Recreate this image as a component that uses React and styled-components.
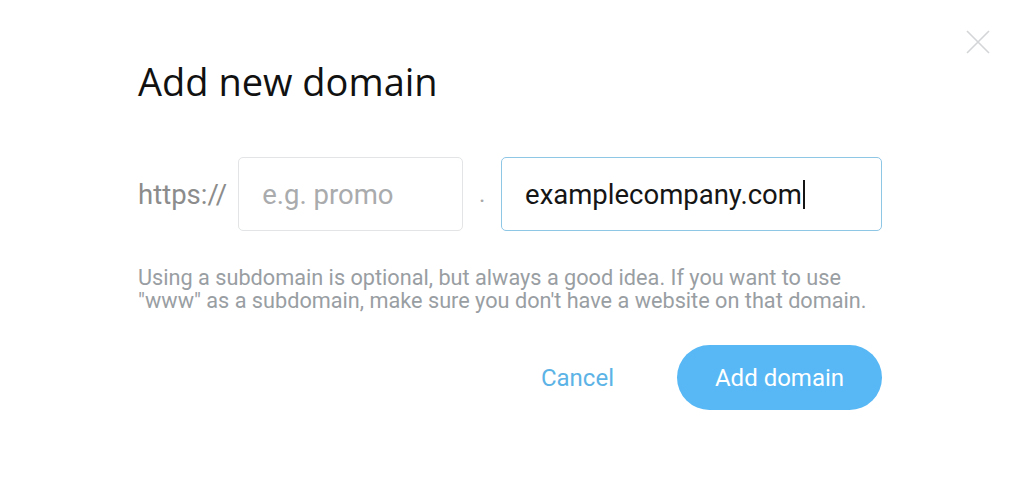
import React from "react";
import styled, { createGlobalStyle } from "styled-components";

const Global = createGlobalStyle`
  html, body {
    margin: 0;
    padding: 0;
    background: #ffffff;
  }
  body {
    font-family: Roboto, "Liberation Sans", sans-serif;
  }
`;

const Page = styled.div`
  position: relative;
  width: 1024px;
  height: 477px;
  box-sizing: border-box;
  padding: 56px 142px 0 138px;
`;

const Close = styled.button`
  position: absolute;
  top: 28px;
  right: 32px;
  width: 28px;
  height: 28px;
  padding: 0;
  border: none;
  background: none;
  cursor: pointer;
`;

const Title = styled.h1`
  margin: 0;
  font-family: "Open Sans", "Noto Sans", sans-serif;
  font-weight: 400;
  font-size: 38px;
  line-height: 50px;
  color: #111111;
`;

const Row = styled.div`
  display: flex;
  align-items: center;
  margin-top: 51px;
`;

const Prefix = styled.span`
  font-size: 27.5px;
  color: #8c8c8c;
  margin-right: 11px;
`;

const Dot = styled.span`
  width: 38px;
  text-align: center;
  font-size: 24px;
  color: #a8a8a8;
`;

const Input = styled.div`
  box-sizing: border-box;
  width: ${(p) => p.$width}px;
  height: 74px;
  display: flex;
  align-items: center;
  padding-left: 23px;
  border: 1px solid ${(p) => (p.$focused ? "#8ec6e6" : "#e2e4e6")};
  border-radius: 5px;
  font-size: 27.5px;
  color: ${(p) => (p.$placeholder ? "#a9abad" : "#151515")};
`;

const Caret = styled.span`
  display: inline-block;
  width: 2px;
  height: 29px;
  margin-left: 1px;
  background: #151515;
`;

const Help = styled.p`
  margin: 35px 0 0;
  font-size: 21.7px;
  line-height: 23px;
  color: #999ea3;
`;

const Actions = styled.div`
  display: flex;
  justify-content: flex-end;
  align-items: center;
  margin-top: 33px;
`;

const CancelButton = styled.button`
  border: none;
  background: none;
  padding: 0;
  margin-right: 63px;
  font-family: Roboto, sans-serif;
  font-size: 24px;
  color: #5cb3e6;
  cursor: pointer;
`;

const PrimaryButton = styled.button`
  width: 205px;
  height: 65px;
  border: none;
  border-radius: 33px;
  background: #57b8f5;
  font-family: Roboto, sans-serif;
  font-size: 24px;
  color: #ffffff;
  cursor: pointer;
`;

const App = () => {
  return (
    <>
      <Global />
      <Page>
        <Close aria-label="Close">
          <svg width="28" height="28" viewBox="0 0 28 28">
            <path d="M3 3 L25 25 M25 3 L3 25" stroke="#d3d5d7" strokeWidth="1.6" fill="none" />
          </svg>
        </Close>
        <Title>Add new domain</Title>
        <Row>
          <Prefix>https://</Prefix>
          <Input $width={225} $placeholder>e.g. promo</Input>
          <Dot>.</Dot>
          <Input $width={381} $focused>
            examplecompany.com
            <Caret />
          </Input>
        </Row>
        <Help>
          Using a subdomain is optional, but always a good idea. If you want to use
          <br />
          "www" as a subdomain, make sure you don't have a website on that domain.
        </Help>
        <Actions>
          <CancelButton>Cancel</CancelButton>
          <PrimaryButton>Add domain</PrimaryButton>
        </Actions>
      </Page>
    </>
  );
};

export default App;
